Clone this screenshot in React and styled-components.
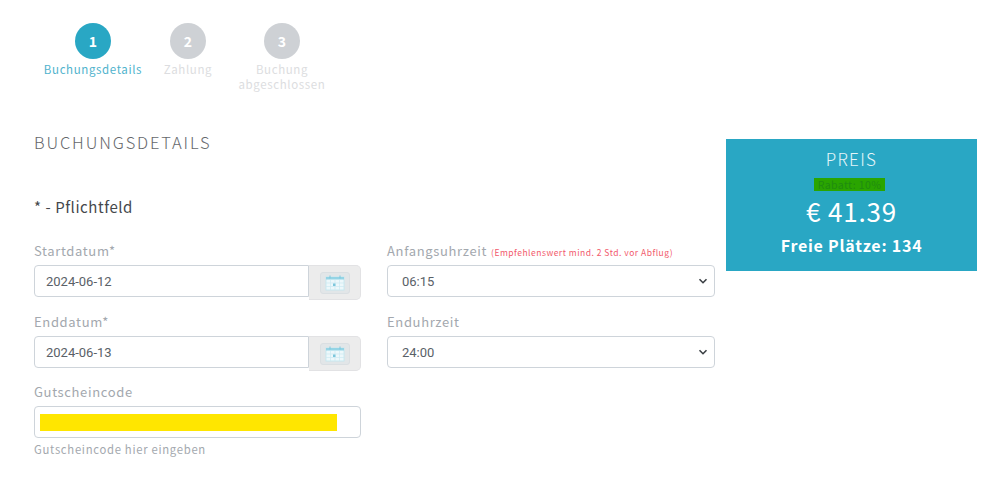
import styled, { createGlobalStyle } from 'styled-components';

const BODY_FONT = '"Noto Sans CJK SC", "Noto Sans", sans-serif';

const GlobalStyle = createGlobalStyle`
  html, body {
    margin: 0;
    background: #fff;
    font-family: ${BODY_FONT};
  }
  * {
    box-sizing: border-box;
  }
`;

const Page = styled.div`
  width: 1000px;
  height: 480px;
  padding: 23px 23px 0 34px;
  overflow: hidden;
`;

const Stepper = styled.ol`
  display: flex;
  margin: 0 0 0 8px;
  padding: 0;
  list-style: none;
  height: 103px;
`;

const Step = styled.li`
  width: ${p => p.$width}px;
  margin-right: ${p => p.$gap}px;
  display: flex;
  flex-direction: column;
  align-items: center;
`;

const Circle = styled.div`
  width: 36px;
  height: 36px;
  border-radius: 50%;
  display: flex;
  align-items: center;
  justify-content: center;
  background: ${p => (p.$active ? '#29a7c4' : '#ced1d5')};
  color: #fff;
  font-size: 14px;
  font-weight: 700;
`;

const StepLabel = styled.div`
  margin-top: 3px;
  font-size: 11.5px;
  line-height: 14.5px;
  letter-spacing: 0.62px;
  text-align: center;
  color: ${p => (p.$active ? '#4fb3cd' : '#dcdde0')};
`;

const Columns = styled.div`
  display: flex;
  gap: 11px;
  align-items: flex-start;
`;

const Main = styled.main`
  width: 681px;
  flex: none;
`;

const Title = styled.h2`
  margin: 0;
  height: 68px;
  padding-top: 3px;
  font-size: 16.5px;
  font-weight: 300;
  line-height: 26px;
  letter-spacing: 1.85px;
  color: #66686c;
`;

const Required = styled.p`
  margin: 0 0 21px;
  height: 26px;
  font-size: 15px;
  line-height: 26px;
  letter-spacing: 0.55px;
  color: #45484c;
`;

const FormGrid = styled.div`
  display: grid;
  grid-template-columns: 327px 328px;
  column-gap: 26px;
  row-gap: 15px;
`;

const Field = styled.div`
  display: flex;
  flex-direction: column;
  margin-top: ${p => (p.$tight ? '-1px' : '0')};
`;

const Label = styled.label`
  height: 24px;
  font-size: 13px;
  line-height: 20px;
  letter-spacing: 0.65px;
  color: #a3a8ae;
  white-space: nowrap;
`;

const Hint = styled.span`
  margin-left: 4px;
  font-size: 8.5px;
  letter-spacing: 0.5px;
  color: #f2596b;
`;

const Group = styled.div`
  display: flex;
  height: 32px;
`;

const Input = styled.div`
  flex: ${p => (p.$joined ? 1 : 'none')};
  height: 32px;
  padding: 0 11px;
  display: flex;
  align-items: center;
  background: #fff;
  border: 1px solid #ced4da;
  border-radius: ${p => (p.$joined ? '4px 0 0 4px' : '4px')};
  font-family: Roboto, "Liberation Sans", sans-serif;
  font-size: 13px;
  color: #5a6168;
`;

const Addon = styled.button`
  width: 52px;
  height: 35px;
  padding: 0;
  display: flex;
  align-items: center;
  justify-content: center;
  background: #ececec;
  border: 1px solid #e2e2e4;
  border-left: 0;
  border-radius: 0 5px 5px 0;
`;

const IconFrame = styled.span`
  width: 30px;
  height: 22px;
  display: flex;
  align-items: center;
  justify-content: center;
  background: #e2e6e8;
  border: 1px solid #dadfe2;
  border-radius: 3px;
`;

const SelectBox = styled.div`
  height: 32px;
  padding: 0 6px 0 14px;
  display: flex;
  align-items: center;
  justify-content: space-between;
  background: #fff;
  border: 1px solid #ced4da;
  border-radius: 4px;
  font-family: Roboto, "Liberation Sans", sans-serif;
  font-size: 13px;
  color: #5a6168;
`;

const Redacted = styled.div`
  width: 297px;
  height: 17px;
  margin: 1px 0 0 -6px;
  background: #ffe600;
`;

const HelpText = styled.small`
  margin-top: 3px;
  font-size: 11.3px;
  line-height: 16px;
  letter-spacing: 0.7px;
  color: #a3a8ae;
`;

const PriceCard = styled.aside`
  width: 251px;
  height: 132px;
  margin-top: 13px;
  padding-top: 8px;
  display: flex;
  flex-direction: column;
  align-items: center;
  background: #29a7c4;
  color: #fff;
`;

const PriceTitle = styled.div`
  font-size: 17px;
  font-weight: 300;
  line-height: 24px;
  letter-spacing: 1.3px;
  color: #e4f5f9;
`;

const Discount = styled.div`
  margin: 7px 4px 0 0;
  padding: 0 4px;
  height: 13px;
  background: #2aa500;
  color: #1f8c10;
  font-size: 10.5px;
  line-height: 13px;
  letter-spacing: 0.4px;
`;

const Amount = styled.div`
  margin-top: 2px;
  font-size: 26px;
  line-height: 36px;
  letter-spacing: 0.8px;
`;

const Seats = styled.div`
  margin-top: 4px;
  font-size: 16px;
  font-weight: 700;
  line-height: 24px;
  letter-spacing: 0.75px;
`;

function CalendarIcon() {
  return (
    <svg width="20" height="16" viewBox="0 0 20 16" fill="none">
      <rect x="1" y="2" width="18" height="13" fill="#edf8fb" stroke="#c0e6f0" strokeWidth="0.8" />
      <rect x="1" y="2" width="18" height="2.5" fill="#94d4e5" />
      <path d="M5 0.5v3M15 0.5v3" stroke="#7cc7dc" strokeWidth="1" />
      <path d="M1 8h18M1 11.5h18M5.5 5v10M10 5v10M14.5 5v10" stroke="#cbeaf2" strokeWidth="0.7" />
      <rect x="8" y="8.5" width="2.5" height="2.5" fill="#7cc7dc" />
    </svg>
  );
}

function Chevron() {
  return (
    <svg width="10" height="8" viewBox="0 0 10 8" fill="none">
      <path d="M1.5 2.2l3.5 3.5 3.5-3.5" stroke="#3a3f44" strokeWidth="1.6" />
    </svg>
  );
}

function DateField({ label, value }) {
  return (
    <Field>
      <Label>{label}</Label>
      <Group>
        <Input $joined>{value}</Input>
        <Addon type="button">
          <IconFrame>
            <CalendarIcon />
          </IconFrame>
        </Addon>
      </Group>
    </Field>
  );
}

function TimeField({ label, hint, value }) {
  return (
    <Field>
      <Label>
        {label}
        {hint && <Hint>{hint}</Hint>}
      </Label>
      <SelectBox>
        {value}
        <Chevron />
      </SelectBox>
    </Field>
  );
}

export default function App() {
  return (
    <Page>
      <GlobalStyle />
      <Stepper>
        <Step $width={102} $gap={14}>
          <Circle $active>1</Circle>
          <StepLabel $active>Buchungsdetails</StepLabel>
        </Step>
        <Step $width={60} $gap={14}>
          <Circle>2</Circle>
          <StepLabel>Zahlung</StepLabel>
        </Step>
        <Step $width={100} $gap={0}>
          <Circle>3</Circle>
          <StepLabel>Buchung abgeschlossen</StepLabel>
        </Step>
      </Stepper>
      <Columns>
        <Main>
          <Title>BUCHUNGSDETAILS</Title>
          <Required>* - Pflichtfeld</Required>
          <FormGrid>
            <DateField label="Startdatum*" value="2024-06-12" />
            <TimeField
              label="Anfangsuhrzeit"
              hint="(Empfehlenswert mind. 2 Std. vor Abflug)"
              value="06:15"
            />
            <DateField label="Enddatum*" value="2024-06-13" />
            <TimeField label="Enduhrzeit" value="24:00" />
            <Field $tight>
              <Label>Gutscheincode</Label>
              <Input>
                <Redacted />
              </Input>
              <HelpText>Gutscheincode hier eingeben</HelpText>
            </Field>
          </FormGrid>
        </Main>
        <PriceCard>
          <PriceTitle>PREIS</PriceTitle>
          <Discount>Rabatt: 10%</Discount>
          <Amount>€ 41.39</Amount>
          <Seats>Freie Plätze: 134</Seats>
        </PriceCard>
      </Columns>
    </Page>
  );
}
